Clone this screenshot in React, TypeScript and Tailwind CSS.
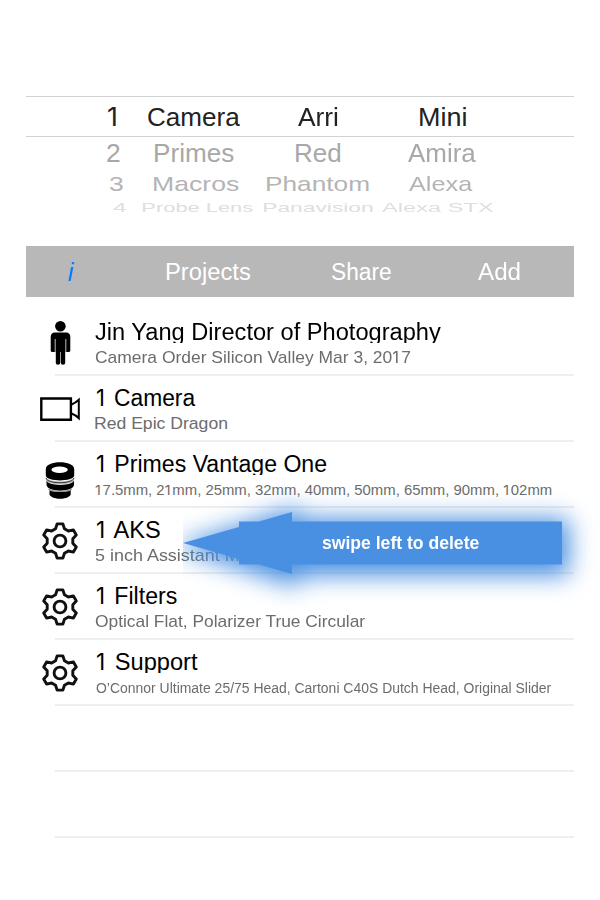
import { useLayoutEffect, useRef, useState } from "react";

/* Single line of text stretched to an exact ink width. */
function Fit({ text, width, className = "", scaleY = 1 }: { text: string; width: number; className?: string; scaleY?: number }) {
  const ref = useRef<HTMLSpanElement>(null);
  const [t, setT] = useState({ x: 0, s: 1 });
  useLayoutEffect(() => {
    const el = ref.current!;
    const cs = getComputedStyle(el);
    const ctx = document.createElement("canvas").getContext("2d")!;
    ctx.font = `${cs.fontStyle} ${cs.fontWeight} ${cs.fontSize} ${cs.fontFamily}`;
    const m = ctx.measureText(text);
    const lb = -m.actualBoundingBoxLeft;
    const rb = m.width - m.actualBoundingBoxRight;
    const natural = parseFloat(cs.width) - lb - rb;
    const s = width / natural;
    setT({ x: -lb * s, s });
  }, [text, width]);
  return (
    <span className={"block shrink-0 whitespace-nowrap " + className} style={{ width }}>
      <span ref={ref} className="inline-block origin-left" style={{ transform: `translateX(${t.x}px) scale(${t.s}, ${scaleY})` }}>
        {text.split(/(1)/).map((p, i) =>
          p === "1" ? (
            <span key={i} className="font-[Inter] text-[0.96em] leading-[0] tracking-[0.13em]">1</span>
          ) : (
            p
          ),
        )}
      </span>
    </span>
  );
}

type Cell = [string, number, number];

/* Row of labels given as [text, left ink edge, right ink edge]. */
function Row({ cells, className, scaleY = 1 }: { cells: Cell[]; className: string; scaleY?: number }) {
  return (
    <div className={"flex " + className}>
      {cells.map(([text, l, r], i) => (
        <div key={text} style={{ marginLeft: l - (i ? cells[i - 1][2] : 0) }}>
          <Fit text={text} width={r - l} scaleY={scaleY} className={text === "i" ? "italic text-[26px] text-[#0a7cff]" : ""} />
        </div>
      ))}
    </div>
  );
}

function Person() {
  return (
    <svg width="48" height="50" viewBox="36 318 48 50">
      <circle cx="60.400" cy="326.300" r="5.300" />
      <path d="M55 332.500h11q4.300 0 4.300 4.500v13.500q0 1.600-1.800 1.600h-16q-1.800 0-1.800-1.600V337q0-4.500 4.300-4.500z" />
      <path d="M55.800 345h9.400v18q0 1.800-2.200 1.800t-2.200-1.800v-12h-.6v12q0 1.800-2.200 1.800t-2.200-1.800z" />
      <path d="M55.200 339v13.500M65.800 339v13.500" stroke="#bbb" strokeWidth="1" />
    </svg>
  );
}

function Camera() {
  return (
    <svg width="48" height="50" viewBox="36 384 48 50" fill="none" stroke="#000" strokeWidth="2.400">
      <path d="M41.300 398.500h29.600v21.300H41.300z" />
      <path d="M71.500 404.500q4-1.500 7.300-4.700v18.400q-3.300-3.200-7.300-4.700" strokeWidth="2" />
    </svg>
  );
}

function Lens() {
  return (
    <svg width="48" height="50" viewBox="36 450 48 50">
      <path d="M49.500 489c3 3.500 18 3.500 21.200 0v5.500c-2 5.600-19.200 5.600-21.200 0z" />
      <path d="M46.500 480c1 6.500 26.500 6.500 27.500 0v5c-1 7.500-26.500 7.500-27.500 0z" />
      <path d="M45.900 476.500c1 6.500 27.200 6.500 28.200 0v3c-1 6.500-27.200 6.500-28.200 0z" fill="#bbb" />
      <path d="M46 478c1 6.300 27 6.300 28 0" fill="none" stroke="#222" strokeWidth="0.900" />
      <path d="M45.800 469c0-9 28.400-9 28.400 0v6.500c-1 6.500-27.400 6.500-28.400 0z" />
      <ellipse cx="59.600" cy="469.700" rx="8.200" ry="3.200" fill="#fff" />
      <path d="M48.500 489c3 3.200 20 3.200 23.200 0" fill="none" stroke="#999" strokeWidth="1.300" />
    </svg>
  );
}

function Gear() {
  const pts: string[] = [];
  for (let k = 0; k < 6; k++) {
    for (const [r, d] of [[13, -20], [17.4, -9.5], [17.4, 9.5], [13, 20]]) {
      const a = ((k * 60 + d) * Math.PI) / 180;
      pts.push(`${(24 + r * Math.sin(a)).toFixed(2)},${(25 - r * Math.cos(a)).toFixed(2)}`);
    }
  }
  return (
    <svg width="48" height="50" viewBox="0 0 48 50" fill="none" stroke="#111" strokeWidth="2.900" strokeLinejoin="round">
      <polygon points={pts.join(" ")} />
      <circle cx="24" cy="25" r="5.900" />
    </svg>
  );
}

const items = [
  { icon: <Person />, title: "Jin Yang Director of Photography", l: 95, r: 441, sub: "Camera Order Silicon Valley Mar 3, 2017", sr: 411 },
  { icon: <Camera />, title: "1 Camera", l: 97, r: 196, sub: "Red Epic Dragon", sr: 228 },
  { icon: <Lens />, title: "1 Primes Vantage One", l: 97, r: 327, sub: "17.5mm, 21mm, 25mm, 32mm, 40mm, 50mm, 65mm, 90mm, 102mm", sr: 551, small: true },
  { icon: <Gear />, title: "1 AKS", l: 97, r: 160, sub: "5 inch Assistant M", sr: 239 },
  { icon: <Gear />, title: "1 Filters", l: 97, r: 176.5, sub: "Optical Flat, Polarizer True Circular", sr: 366 },
  { icon: <Gear />, title: "1 Support", l: 97, r: 198, sub: "O’Connor Ultimate 25/75 Head, Cartoni C40S Dutch Head, Original Slider", sr: 551, small: true },
];

export default function App() {
  return (
    <div className="relative h-[900px] w-[600px] overflow-hidden bg-white pt-24 font-['Liberation_Sans',Arial,sans-serif] text-black">
      <section className="h-[150px] text-[26.5px]">
        <div className="ml-[26px] h-px w-[548px] bg-[#d2d2d2]" />
        <Row className="h-[39px] leading-[40px] text-[#222]" cells={[["1", 109, 120.5], ["Camera", 148, 240], ["Arri", 298, 338], ["Mini", 419.5, 466]]} />
        <div className="ml-[26px] h-px w-[548px] bg-[#d2d2d2]" />
        <Row scaleY={0.96} className="h-[31px] leading-[32px] text-[#a8a8a8]" cells={[["2", 107, 120], ["Primes", 155, 234], ["Red", 296, 341], ["Amira", 408, 476]]} />
        <Row scaleY={0.75} className="h-8 leading-8 text-[#b4b4b4]" cells={[["3", 109.5, 122.5], ["Macros", 153.5, 238.5], ["Phantom", 267, 369], ["Alexa", 408.5, 472]]} />
        <Row scaleY={0.48} className="h-[15px] bg-linear-to-b from-[#d2d2d2] to-[#f2f2f2] bg-clip-text leading-[15px] text-[#dedede]" cells={[["4", 113, 126], ["Probe Lens", 142.5, 252.5], ["Panavision", 263.5, 372.5], ["Alexa STX", 382, 494]]} />
      </section>

      <nav className="ml-[25.5px] h-[51px] w-[548px] bg-[#b8b8b8]">
        <Row className="-ml-[25.5px] text-[23.5px] leading-[52px] text-white" cells={[["i", 68, 75], ["Projects", 166, 250], ["Share", 332, 391.5], ["Add", 478, 520]]} />
      </nav>

      <ul className="mt-[13px]">
        {items.map((it) => (
          <li key={it.title} className="flex h-[66px] pl-9">
            <div className="h-[50px] w-12 pt-2">{it.icon}</div>
            <div className="flex-1">
              <div className="h-[33px] overflow-hidden pt-[10px] text-[23.5px] leading-[25px]" style={{ paddingLeft: it.l - 84 }}>
                <Fit text={it.title} width={it.r - it.l} />
              </div>
              <div className={it.small ? "h-[31px] pl-[11.5px] pt-[3px] text-[14px] leading-[25px] text-[#6c6c6c]" : "h-[31px] pl-[11px] pt-[2px] text-[17px] leading-[25px] text-[#6c6c6c]"}>
                <Fit text={it.sub} width={it.sr - 95.5} />
              </div>
              <div className="-ml-[29px] h-[2px] w-[519px] bg-[#eeeeee]" />
            </div>
          </li>
        ))}
        {[0, 1].map((n) => (
          <li key={n} className="flex h-[66px] items-end pl-[55px]">
            <div className="h-[2px] w-[519px] bg-[#eeeeee]" />
          </li>
        ))}
      </ul>

      <div className="absolute left-[183px] top-[480px] h-[140px] w-[417px]">
        <svg width="417" height="140" viewBox="183 480 417 140" className="block overflow-hidden">
          <defs>
            <filter id="glow" x="60" y="420" width="600" height="260" filterUnits="userSpaceOnUse" colorInterpolationFilters="sRGB">
              <feGaussianBlur stdDeviation="12" />
            </filter>
          </defs>
          <path filter="url(#glow)" transform="translate(0 4)" fill="#4a90e2" stroke="#4a90e2" strokeWidth="14" d="M196 543L292 512V521.500H562V564.500H292V574z" />
          <path fill="#4a90e2" d="M183 543L239 527V521.500H259L292 512V521.500H562V564.500H292V574L259 564.500H239V559z" />
        </svg>
        <div className="absolute left-[139px] top-[52px] text-[18.5px] font-bold leading-[22px] text-white">
          <Fit text="swipe left to delete" width={157} />
        </div>
      </div>
    </div>
  );
}
